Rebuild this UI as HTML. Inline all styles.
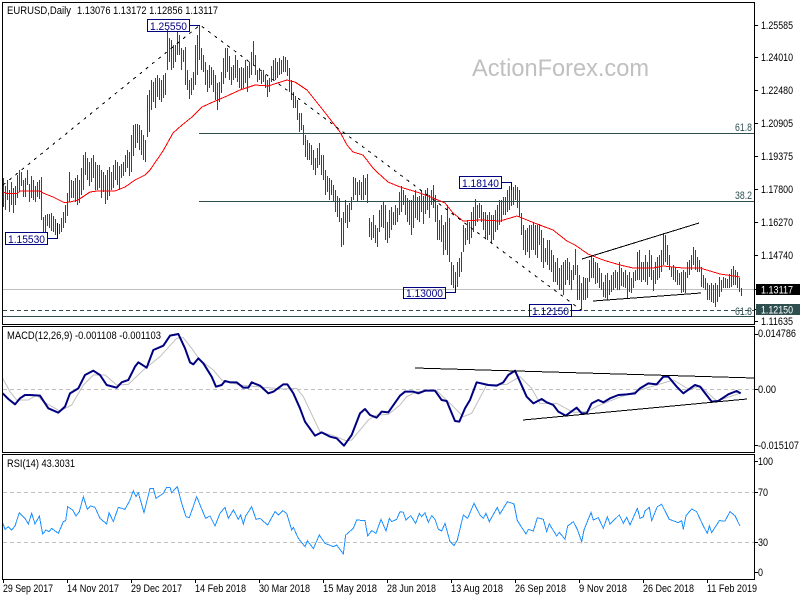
<!DOCTYPE html>
<html><head><meta charset="utf-8"><title>EURUSD Daily</title>
<style>
html,body{margin:0;padding:0;background:#fff;width:800px;height:600px;overflow:hidden}
svg{display:block}
text{font-family:"Liberation Sans",Arial,sans-serif;font-size:11px;fill:#000;white-space:pre}
.n{fill:#000080}
.s{fill:#2f4f4f}
.w{fill:#fff}
</style></head><body>
<svg xmlns="http://www.w3.org/2000/svg" width="800" height="600" viewBox="0 0 800 600">
<rect width="800" height="600" fill="#fff"/>
<text x="472" y="76" style="font-size:24px;fill:#c0c0c0" textLength="177" lengthAdjust="spacingAndGlyphs">ActionForex.com</text>

<!-- levels -->
<g shape-rendering="crispEdges" fill="none">
<path d="M3 289.5H754" stroke="#c0c0c0"/>
<path d="M199 133.5H754M199 201.5H754M3 316.5H754" stroke="#2f4f4f"/>
<path d="M3 310.5H754" stroke="#2f4f4f" stroke-dasharray="4 3"/>
</g>

<!-- price bars -->
<path transform="translate(.5,0)" shape-rendering="crispEdges" fill="none" stroke="#1a4d68" d="M3 178V207M5 186V210M7 180V200M9 190V212M11 182V205M13 188V213M15 186V205M17 175V198M19 170V192M21 172V186M23 180V197M25 178V197M27 170V185M29 184V202M31 176V198M33 180V200M35 186V202M37 182V197M39 180V199M41 177V220M43 217V233M45 215V232M47 214V226M49 214V228M51 213V231M53 216V232M55 219V235M57 223V238M59 224V234M61 218V232M63 212V228M65 205V223M67 193V216M69 172V202M71 180V198M73 181V198M75 178V202M77 175V205M79 180V203M81 168V195M83 155V190M85 152V175M87 158V180M89 162V186M91 158V182M93 155V178M95 162V190M97 165V190M99 165V188M101 170V198M103 172V192M105 175V204M107 170V200M109 167V196M111 172V190M113 165V188M115 160V180M117 162V185M119 166V190M121 164V178M123 162V176M125 155V172M127 150V168M129 152V176M131 135V172M133 125V156M135 124V148M137 124V143M139 125V150M141 130V155M143 135V160M145 140V162M147 95V137M149 90V132M151 80V110M153 82V102M155 78V108M157 75V97M159 78V100M161 80V102M163 75V98M165 73V95M167 30V70M169 38V62M171 40V70M173 45V68M175 45V62M177 32V55M179 35V55M181 48V70M183 50V62M185 47V85M187 70V90M189 80V99M191 78V95M193 72V90M195 45V85M197 35V75M199 25V60M201 48V70M203 55V72M205 62V85M207 70V92M209 65V88M211 67V85M213 70V92M215 75V100M217 83V110M219 82V102M221 72V93M223 58V84M225 48V78M227 48V72M229 56V80M231 67V85M233 65V80M235 55V78M237 60V82M239 68V88M241 67V90M243 68V88M245 60V83M247 66V92M249 62V78M251 52V75M253 41V65M255 55V75M257 70V82M259 68V80M261 72V84M263 70V82M265 75V88M267 80V97M269 78V92M271 66V82M273 60V80M275 58V80M277 62V78M279 58V75M281 60V74M283 56V72M285 57V72M287 60V76M289 68V92M291 80V100M293 92V108M295 96V108M297 100V120M299 113V132M301 113V130M303 125V145M305 135V157M307 140V160M309 143V160M311 145V165M313 150V170M315 158V175M317 148V168M319 143V165M321 155V175M323 155V180M325 170V195M327 176V192M329 178V200M331 180V195M333 185V202M335 190V212M337 196V217M339 198V222M341 218V247M343 212V245M345 200V223M347 205V228M349 203V222M351 197V210M353 177V200M355 178V195M357 182V202M359 180V195M361 182V200M363 175V200M365 178V195M367 174V203M369 218V237M371 222V240M373 215V238M375 225V243M377 228V247M379 210V232M381 205V227M383 202V228M385 205V240M387 222V243M389 210V238M391 207V230M393 212V225M395 205V225M397 208V222M399 192V215M401 186V212M403 190V205M405 195V215M407 198V222M409 200V225M411 200V235M413 195V228M415 190V218M417 197V220M419 196V222M421 190V212M423 196V224M425 190V214M427 188V210M429 195V218M431 190V205M433 185V208M435 195V222M437 205V240M439 220V240M441 215V242M443 225V255M445 222V250M447 205V255M449 218V262M451 262V285M453 265V288M455 272V292M457 262V287M459 258V277M461 252V272M463 225V252M465 228V245M467 220V240M469 222V244M471 212V238M473 207V232M475 199V226M477 205V222M479 203V218M481 205V222M483 212V230M485 212V238M487 215V240M489 212V235M491 215V243M493 215V240M495 210V232M497 205V230M499 200V225M501 200V222M503 197V215M505 197V215M507 190V212M509 186V210M511 183V206M513 187V205M515 185V200M517 187V208M519 190V217M521 213V235M523 225V250M525 230V255M527 228V252M529 225V258M531 225V250M533 222V250M535 225V255M537 225V258M539 224V245M541 230V262M543 238V268M545 248V262M547 240V265M549 240V270M551 250V272M553 255V282M555 262V282M557 258V285M559 268V290M561 265V290M563 262V295M565 260V285M567 258V280M569 262V285M571 270V290M573 265V280M575 249V275M577 265V300M579 275V300M581 283V310M583 277V300M585 278V300M587 278V298M589 260V282M591 256V278M593 258V278M595 262V284M597 263V283M599 268V288M601 273V290M603 282V297M605 275V298M607 273V300M609 280V295M611 275V292M613 272V290M615 270V288M617 272V290M619 262V290M621 268V286M623 272V287M625 270V288M627 275V298M629 272V292M631 278V293M633 272V288M635 270V281M637 252V280M639 250V280M641 262V282M643 262V280M645 255V282M647 262V285M649 250V277M651 255V280M653 270V291M655 262V284M657 257V280M659 255V278M661 250V272M663 233V265M665 235V262M667 245V265M669 255V270M671 267V277M673 265V280M675 267V282M677 270V285M679 273V285M681 272V293M683 270V292M685 272V293M687 262V278M689 260V275M691 255V270M693 247V265M695 250V270M697 257V272M699 260V272M701 267V287M703 275V288M705 278V290M707 283V300M709 285V300M711 283V302M713 285V303M715 283V307M717 285V302M719 277V297M721 280V292M723 277V288M725 278V288M727 279V288M729 274V288M731 269V287M733 266V285M735 270V285M737 272V288M739 278V292M741 288V296"/>

<!-- MA -->
<polyline shape-rendering="crispEdges" fill="none" stroke="#ff0000" stroke-width="1" points="3,192 7,193.5 17,193.5 20,191 40,191 43,193 53,197 64,202.5 70,202 78,200 90,192 97,191 115,191 125,187 135,180 145,175 150,170 163,151 173,133 182,125 192,117 202,107 213,102 227,96 240,90 255,85 268,86 287,80 295,82 307,90 323,110 340,132 347,145 353,152 363,155 373,168 377,172 388,182 400,187 420,193 433,198 445,203 453,213 463,221 480,220 500,221 517,216 537,224 553,230 567,241 575,245 588,254 603,260 620,265 633,268 653,268 663,266 673,267 683,268 700,268 720,274 740,277"/>

<!-- zigzag -->
<path d="M3 185L200 25L581 310" fill="none" stroke="#000" stroke-dasharray="3 5" shape-rendering="crispEdges"/>

<!-- trend lines -->
<path d="M582 259L699 223M593 301L701 293" fill="none" stroke="#000" stroke-width="1" shape-rendering="crispEdges"/>

<!-- labels on chart -->
<g fill="none" stroke="#000080" shape-rendering="crispEdges">
<rect x="147.5" y="19.5" width="42" height="12"/><path d="M190 25.5H200"/>
<rect x="5.5" y="232.5" width="42" height="12"/><path d="M48 238.5H57.5V223"/>
<rect x="459.5" y="176.5" width="42" height="12"/><path d="M502 182.5H511.5V190"/>
<rect x="403.5" y="287.5" width="42" height="11"/><path d="M446 292.5H455.5V285"/>
<rect x="529.5" y="304.5" width="42" height="12"/><path d="M572 310.5H581.5"/>
</g>
<text class="n" x="150" y="30" textLength="37" lengthAdjust="spacingAndGlyphs">1.25550</text>
<text class="n" x="8" y="243" textLength="37" lengthAdjust="spacingAndGlyphs">1.15530</text>
<text class="n" x="462" y="187" textLength="37" lengthAdjust="spacingAndGlyphs">1.18140</text>
<text class="n" x="406" y="297" textLength="37" lengthAdjust="spacingAndGlyphs">1.13000</text>
<text class="n" x="532" y="315" textLength="37" lengthAdjust="spacingAndGlyphs">1.12150</text>
<text class="s" x="735" y="131" textLength="17" lengthAdjust="spacingAndGlyphs">61.8</text>
<text class="s" x="735" y="199" textLength="17" lengthAdjust="spacingAndGlyphs">38.2</text>
<text class="s" x="735" y="315" textLength="17" lengthAdjust="spacingAndGlyphs">61.8</text>

<!-- MACD -->
<path d="M3 389.5H754" stroke="#c0c0c0" stroke-dasharray="4 3" shape-rendering="crispEdges"/>
<g transform="translate(0,325) scale(.33333)" fill="none" stroke="#c0c0c0">
<polyline vector-effect="non-scaling-stroke" stroke-width="1" points="8,160 30,200 50,225 85,225 110,210 130,230 180,258 215,240 250,180 280,150 315,150 350,180 385,178 430,135 480,95 530,40 550,38 575,70 600,105 640,135 665,165 720,180 790,187 850,192 890,190 910,215 960,320 1000,332 1040,348 1055,345 1105,285 1130,270 1165,268 1200,240"/>
</g>
<g transform="translate(400,325) scale(.33333)" fill="none" stroke="#c0c0c0">
<polyline vector-effect="non-scaling-stroke" stroke-width="1" points="0,240 20,215 50,200 110,197 150,235 190,275 215,265 260,180 320,178 360,155 395,190 420,235 470,235 520,262 560,260 600,240 650,220 720,195 820,165 870,195 900,182 950,228 1020,205"/>
</g>
<g transform="translate(0,325) scale(.33333)" fill="none" stroke="#000080">
<polyline vector-effect="non-scaling-stroke" stroke-width="2" stroke-linejoin="round" points="8,205 25,222 45,238 60,220 75,210 90,210 120,212 145,250 175,263 195,245 210,205 235,190 255,150 280,137 300,150 320,180 350,188 365,172 385,165 405,125 415,112 440,128 460,75 490,62 510,32 535,27 555,70 570,112 580,118 595,100 610,115 635,155 648,185 665,180 675,168 690,172 710,172 730,188 745,188 755,172 780,182 805,205 820,200 850,178 862,178 880,205 900,250 915,290 945,332 965,322 990,335 1010,340 1032,362 1055,330 1080,265 1095,252 1110,270 1130,278 1145,260 1165,262 1200,212 1215,200 1240,200 1255,205 1275,197 1305,197 1325,225 1340,228 1365,288 1378,290 1395,250 1410,225 1430,172 1465,180 1490,182 1510,172 1525,150 1545,137 1560,170 1580,215 1600,235 1625,222 1640,232 1660,240 1675,260 1697,272 1730,248 1745,265 1760,265 1775,235 1795,225 1810,232 1830,220 1855,210 1880,208 1905,205 1920,190 1945,175 1970,178 1990,155 2005,155 2030,185 2050,205 2085,180 2100,185 2135,230 2155,228 2185,208 2210,198 2222,205"/>
</g>
<path d="M415 368L754 378M523 420L747 399" fill="none" stroke="#000" stroke-width="1" shape-rendering="crispEdges"/>

<!-- RSI -->
<path d="M3 492.5H754M3 542.5H754" stroke="#c0c0c0" stroke-dasharray="4 3" shape-rendering="crispEdges"/>
<g transform="translate(0,450) scale(.33333)" fill="none" stroke="#1e90ff" shape-rendering="crispEdges">
<polyline vector-effect="non-scaling-stroke" stroke-width="1" points="8,218 15,238 25,230 35,240 45,228 58,188 75,205 85,222 95,190 105,222 118,198 128,252 138,240 147,245 155,235 175,250 190,215 197,212 203,170 218,180 228,198 238,185 250,140 262,178 272,168 285,172 300,205 320,222 327,188 340,215 355,172 375,178 390,150 400,122 408,140 415,128 432,188 450,115 460,115 468,145 490,130 500,112 510,112 515,128 532,110 545,160 558,200 568,203 590,140 603,172 617,205 630,198 645,228 660,190 675,172 685,205 700,180 715,208 722,195 730,222 737,198 755,170 768,208 780,205 803,225 825,185 835,195 848,182 860,190 875,240 880,232 895,265 915,290 922,272 940,296 958,255 975,280 1000,290 1010,285 1030,312 1037,255 1060,235 1070,210 1095,212 1103,258 1115,242 1128,250 1143,208 1158,243 1168,205 1175,215 1190,208 1200,185"/>
</g>
<g transform="translate(400,450) scale(.33333)" fill="none" stroke="#1e90ff" shape-rendering="crispEdges">
<polyline vector-effect="non-scaling-stroke" stroke-width="1" points="0,185 10,187 18,210 32,197 47,220 58,190 65,200 75,188 85,217 95,197 105,208 115,238 125,243 135,220 150,275 162,287 172,270 190,195 203,205 222,160 240,195 250,205 258,190 268,215 292,172 300,192 322,155 342,162 352,212 378,252 385,238 400,243 412,203 430,208 440,245 448,222 470,258 478,247 495,268 503,228 520,215 532,238 545,275 552,240 573,187 580,210 595,203 610,235 622,200 630,222 658,195 670,220 680,202 690,225 712,175 720,205 730,200 735,183 748,172 755,212 772,170 785,163 808,208 835,218 845,212 850,238 858,197 875,177 890,185 910,228 922,250 928,228 935,248 958,212 975,213 990,185 1005,197 1020,228"/>
</g>

<!-- frames -->
<g shape-rendering="crispEdges" fill="none" stroke="#000">
<path d="M2.5 2.5H754.5V324.5H2.5ZM2.5 326.5H754.5V452.5H2.5ZM2.5 454.5H754.5V579.5H2.5Z"/>
<path d="M754 25.5h4M754 57.5h4M754 90.5h4M754 123.5h4M754 156.5h4M754 189.5h4M754 222.5h4M754 255.5h4M754 289.5h2M754 309.5h2M754 321.5h4M754 334.5h4M754 389.5h4M754 445.5h4M754 461.5h4M754 492.5h4M754 542.5h4M754 572.5h4"/>
<path d="M3.5 579v4M67.5 579v4M131.5 579v4M195.5 579v4M259.5 579v4M323.5 579v4M387.5 579v4M451.5 579v4M515.5 579v4M579.5 579v4M643.5 579v4M707.5 579v4"/>
</g>

<!-- headers -->
<text x="7" y="14" textLength="64" lengthAdjust="spacingAndGlyphs">EURUSD,Daily</text>
<text x="77" y="14" textLength="141" lengthAdjust="spacingAndGlyphs">1.13076 1.13172 1.12856 1.13117</text>
<text x="7" y="339" textLength="154" lengthAdjust="spacingAndGlyphs">MACD(12,26,9) -0.001108 -0.001103</text>
<text x="7" y="467" textLength="68" lengthAdjust="spacingAndGlyphs">RSI(14) 43.3031</text>

<!-- price axis -->
<g>
<text x="761" y="29" textLength="32" lengthAdjust="spacingAndGlyphs">1.25585</text>
<text x="761" y="61" textLength="32" lengthAdjust="spacingAndGlyphs">1.24010</text>
<text x="761" y="94" textLength="32" lengthAdjust="spacingAndGlyphs">1.22480</text>
<text x="761" y="127" textLength="32" lengthAdjust="spacingAndGlyphs">1.20905</text>
<text x="761" y="160" textLength="32" lengthAdjust="spacingAndGlyphs">1.19375</text>
<text x="761" y="193" textLength="32" lengthAdjust="spacingAndGlyphs">1.17800</text>
<text x="761" y="226" textLength="32" lengthAdjust="spacingAndGlyphs">1.16270</text>
<text x="761" y="259" textLength="32" lengthAdjust="spacingAndGlyphs">1.14740</text>
<rect x="756" y="284" width="44" height="11" fill="#000"/>
<text class="w" x="761" y="293.5" textLength="32" lengthAdjust="spacingAndGlyphs">1.13117</text>
<rect x="756" y="304" width="44" height="11" fill="#2f4f4f"/>
<text class="w" x="761" y="313.5" textLength="32" lengthAdjust="spacingAndGlyphs">1.12150</text>
<text x="761" y="325" textLength="32" lengthAdjust="spacingAndGlyphs">1.11635</text>
<text x="758" y="337" textLength="38" lengthAdjust="spacingAndGlyphs">0.014786</text>
<text x="758" y="393" textLength="18" lengthAdjust="spacingAndGlyphs">0.00</text>
<text x="758" y="449" textLength="41" lengthAdjust="spacingAndGlyphs">-0.015107</text>
<text x="758" y="465" textLength="15" lengthAdjust="spacingAndGlyphs">100</text>
<text x="758" y="496" textLength="10" lengthAdjust="spacingAndGlyphs">70</text>
<text x="758" y="546" textLength="10" lengthAdjust="spacingAndGlyphs">30</text>
<text x="758" y="576" textLength="5" lengthAdjust="spacingAndGlyphs">0</text>
</g>

<!-- date axis -->
<g>
<text x="3" y="592" textLength="50" lengthAdjust="spacingAndGlyphs">29 Sep 2017</text>
<text x="67" y="592" textLength="52" lengthAdjust="spacingAndGlyphs">14 Nov 2017</text>
<text x="131" y="592" textLength="51" lengthAdjust="spacingAndGlyphs">29 Dec 2017</text>
<text x="195" y="592" textLength="51" lengthAdjust="spacingAndGlyphs">14 Feb 2018</text>
<text x="259" y="592" textLength="51" lengthAdjust="spacingAndGlyphs">30 Mar 2018</text>
<text x="323" y="592" textLength="54" lengthAdjust="spacingAndGlyphs">15 May 2018</text>
<text x="387" y="592" textLength="49" lengthAdjust="spacingAndGlyphs">28 Jun 2018</text>
<text x="451" y="592" textLength="52" lengthAdjust="spacingAndGlyphs">13 Aug 2018</text>
<text x="515" y="592" textLength="51" lengthAdjust="spacingAndGlyphs">26 Sep 2018</text>
<text x="579" y="592" textLength="48" lengthAdjust="spacingAndGlyphs">9 Nov 2018</text>
<text x="643" y="592" textLength="51" lengthAdjust="spacingAndGlyphs">26 Dec 2018</text>
<text x="707" y="592" textLength="50" lengthAdjust="spacingAndGlyphs">11 Feb 2019</text>
</g>
</svg>
</body></html>
